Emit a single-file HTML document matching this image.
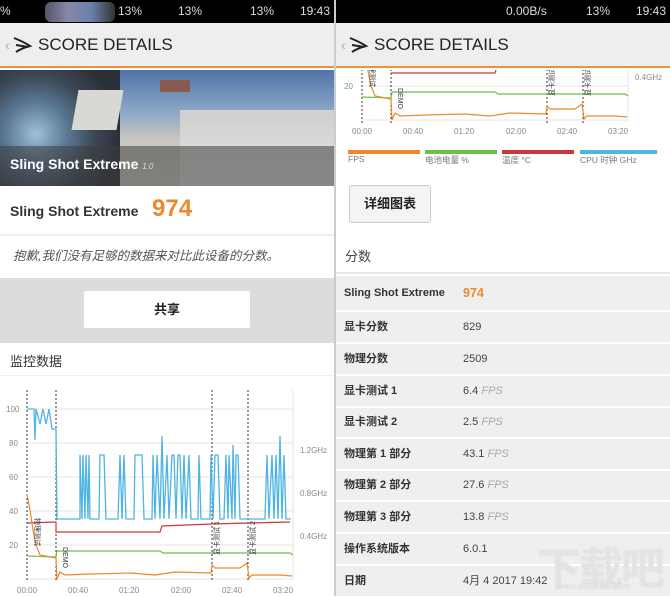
<!DOCTYPE html>
<html><head><meta charset="utf-8"><style>
*{margin:0;padding:0;box-sizing:border-box}
body{width:670px;height:596px;overflow:hidden;background:#fff;font-family:"Liberation Sans","Noto Sans CJK SC",sans-serif;position:relative}
.abs{position:absolute}
.sb{background:#000;height:23px;color:#ddd;font-size:12px;line-height:23px}
.hd{top:23px;height:45px;background:#eeeeee;border-bottom:2px solid #f0913a;font-size:17px;color:#222;line-height:44px}
.row{left:336px;width:334px;background:#efefef;border-top:2px solid #fff;font-size:11px;font-weight:bold;color:#333}
.row span{position:absolute;left:127px;font-weight:normal;color:#444}
.row i{color:#aaa}
</style></head><body>
<div class="abs sb" style="left:0;top:0;width:334px"><span style="position:absolute;left:0">%</span><span style="position:absolute;left:118px">13%</span><span style="position:absolute;left:178px">13%</span><span style="position:absolute;left:250px">13%</span><span style="position:absolute;left:300px">19:43</span>
<div class="abs" style="left:45px;top:2px;width:70px;height:20px;background:linear-gradient(90deg,#556,#88a,#6a7fa8,#333);border-radius:6px"></div></div>
<div class="abs sb" style="left:336px;top:0;width:334px"><span style="position:absolute;left:170px">0.00B/s</span><span style="position:absolute;left:250px">13%</span><span style="position:absolute;left:300px">19:43</span></div>
<div class="abs" style="left:334px;top:0;width:2px;height:596px;background:#ccc"></div>
<div class="abs hd" style="left:0;width:334px"><span style="position:absolute;left:5px;color:#aaa;font-size:14px">‹</span><svg class="abs" style="left:12px;top:13px" width="22" height="18"><path d="M2 2 Q12 6 18 10 Q10 12 4 16 M4 9 L16 11" stroke="#222" stroke-width="2" fill="none"/></svg><span style="position:absolute;left:38px">SCORE DETAILS</span></div>
<div class="abs hd" style="left:336px;width:334px"><span style="position:absolute;left:5px;color:#aaa;font-size:14px">‹</span><svg class="abs" style="left:12px;top:13px" width="22" height="18"><path d="M2 2 Q12 6 18 10 Q10 12 4 16 M4 9 L16 11" stroke="#222" stroke-width="2" fill="none"/></svg><span style="position:absolute;left:38px">SCORE DETAILS</span></div>
<div class="abs" style="left:0;top:70px;width:334px;height:116px;background:linear-gradient(180deg,#4f74a8 0%,#8aa6c6 35%,#c9c7bf 60%,#d8d4cc 100%);overflow:hidden">
<div class="abs" style="left:-20px;top:0;width:140px;height:116px;background:radial-gradient(circle at 40% 55%,#9ec0d8 0,#5a7894 30%,#3c4856 55%,#2b2f36 80%)"></div>
<div class="abs" style="left:75px;top:20px;width:45px;height:40px;background:#d8d8d4;transform:skew(-10deg)"></div>
<div class="abs" style="left:180px;top:40px;width:154px;height:76px;background:linear-gradient(180deg,#cfcfcf,#e6e4e0)"></div>
<div class="abs" style="left:160px;top:10px;width:30px;height:12px;background:#8a5a50"></div>
<div class="abs" style="left:0;top:76px;width:334px;height:40px;background:rgba(60,60,60,.55)"></div>
<div class="abs" style="left:10px;top:86px;color:#fff;font-weight:bold;font-size:14px">Sling Shot Extreme <span style="font-size:8px;font-style:italic;color:#ddd;font-weight:normal">1.0</span></div>
</div>
<div class="abs" style="left:0;top:186px;width:334px;height:50px;border-bottom:2px solid #eee"><span class="abs" style="left:10px;top:17px;font-size:14px;font-weight:bold;color:#333">Sling Shot Extreme</span><span class="abs" style="left:152px;top:9px;font-size:24px;font-weight:bold;color:#f0872a">974</span></div>
<div class="abs" style="left:13px;top:245px;font-size:12.5px;font-style:italic;color:#555">抱歉,我们没有足够的数据来对比此设备的分数。</div>
<div class="abs" style="left:0;top:278px;width:334px;height:65px;background:#dcdcdc"></div>
<div class="abs" style="left:84px;top:291px;width:166px;height:37px;background:#fff;border-radius:2px;text-align:center;line-height:37px;font-size:13px;font-weight:bold;color:#222">共享</div>
<div class="abs" style="left:10px;top:351px;font-size:13px;color:#333">监控数据</div>
<div class="abs" style="left:0;top:375px;width:334px;height:1px;background:#eee"></div>
<svg class="abs" style="left:0;top:0" width="334" height="596">
<g font-family="Liberation Sans" font-size="8" fill="#888">
<g stroke="#e4e4e4"><line x1="27" x2="293" y1="409" y2="409"/><line x1="27" x2="293" y1="443" y2="443"/><line x1="27" x2="293" y1="477" y2="477"/><line x1="27" x2="293" y1="511" y2="511"/><line x1="27" x2="293" y1="545" y2="545"/><line x1="27" x2="293" y1="579" y2="579"/><line x1="293" x2="293" y1="390" y2="579"/></g>
<text x="6" y="412">100</text><text x="9" y="446">80</text><text x="9" y="480">60</text><text x="9" y="514">40</text><text x="9" y="548">20</text>
<text x="300" y="453">1.2GHz</text><text x="300" y="496">0.8GHz</text><text x="300" y="539">0.4GHz</text>
<text x="17" y="593">00:00</text><text x="68" y="593">00:40</text><text x="119" y="593">01:20</text><text x="171" y="593">02:00</text><text x="222" y="593">02:40</text><text x="273" y="593">03:20</text>
</g>
<g stroke="#333" stroke-dasharray="2,2"><line x1="27" x2="27" y1="390" y2="582"/><line x1="56" x2="56" y1="390" y2="582"/><line x1="212" x2="212" y1="390" y2="582"/><line x1="248" x2="248" y1="390" y2="582"/></g>
<polyline fill="none" stroke="#4fb3e3" stroke-width="1.3" points="27,409 34,409 35,440 36,409 40,424 43,409 46,424 49,409 52,429 56,429 57,519 80,519 80,455 82,519 83,455 85,519 86,455 88,519 89,455 90,519 99,519 100,455 104,455 106,519 118,519 120,455 122,519 124,455 126,519 134,519 135,455 142,455 144,519 152,519 153,455 155,519 157,455 160,519 162,436 164,519 167,455 169,519 172,455 174,455 176,519 178,455 180,455 182,519 184,455 186,519 189,455 191,519 198,519 199,455 201,519 210,519 211,455 213,519 215,455 218,455 220,519 224,519 226,455 228,519 229,455 232,519 233,445 235,519 236,455 238,455 240,519 265,519 267,455 269,519 272,455 274,519 276,455 278,519 280,436 282,519 284,455 286,519 291,519"/>
<polyline fill="none" stroke="#c8373b" stroke-width="1.2" points="27,523 56,522 56,532 160,532 162,526 212,524 248,523 290,522"/>
<polyline fill="none" stroke="#6dbf4b" stroke-width="1.2" points="27,556 56,557 57,551 160,551 163,553 290,553 293,555"/>
<polyline fill="none" stroke="#f0872a" stroke-width="1.2" points="27,494 30,510 33,530 36,545 40,555 56,558 57,579 60,572 65,575 90,574 130,573 155,575 175,572 211,573 212,565 215,568 240,568 247,563 249,578 252,575 280,575 292,576"/>
<g font-size="7" fill="#333" font-family="Liberation Sans,Noto Sans CJK SC,sans-serif"><text transform="translate(35,548) rotate(90)" x="-30">物理测试</text><text transform="translate(63,552) rotate(90)" x="-5">DEMO</text><text transform="translate(219,555) rotate(-90)">显卡测试 1</text><text transform="translate(255,555) rotate(-90)">显卡测试 2</text></g>
</svg>
<svg class="abs" style="left:336px;top:70px" width="334" height="72">
<g transform="translate(-1,-529)">
<g stroke="#e4e4e4"><line x1="27" x2="293" y1="511" y2="511"/><line x1="27" x2="293" y1="545" y2="545"/><line x1="27" x2="293" y1="579" y2="579"/><line x1="293" x2="293" y1="500" y2="579"/></g>
<g font-family="Liberation Sans" font-size="8" fill="#888"><text x="9" y="548">20</text><text x="300" y="539">0.4GHz</text>
<text x="17" y="593">00:00</text><text x="68" y="593">00:40</text><text x="119" y="593">01:20</text><text x="171" y="593">02:00</text><text x="222" y="593">02:40</text><text x="273" y="593">03:20</text></g>
<g stroke="#333" stroke-dasharray="2,2"><line x1="27" x2="27" y1="500" y2="582"/><line x1="56" x2="56" y1="500" y2="582"/><line x1="212" x2="212" y1="500" y2="582"/><line x1="248" x2="248" y1="500" y2="582"/></g>
<polyline fill="none" stroke="#c8373b" stroke-width="1.2" points="56,532 160,532 162,526"/>
<polyline fill="none" stroke="#6dbf4b" stroke-width="1.2" points="27,556 56,557 57,551 160,551 163,553 290,553 293,555"/>
<polyline fill="none" stroke="#f0872a" stroke-width="1.2" points="27,494 30,510 33,530 36,545 40,555 56,558 57,579 60,572 65,575 90,574 130,573 155,575 175,572 211,573 212,565 215,568 240,568 247,563 249,578 252,575 280,575 292,576"/>
<g font-size="7" fill="#333" font-family="Liberation Sans,Noto Sans CJK SC,sans-serif"><text transform="translate(35,548) rotate(90)" x="-30">物理测试</text><text transform="translate(63,552) rotate(90)" x="-5">DEMO</text><text transform="translate(219,555) rotate(-90)">显卡测试 1</text><text transform="translate(255,555) rotate(-90)">显卡测试 2</text></g>
</g></svg>
<div class="abs" style="left:348px;top:150px;width:72px;height:4px;background:#f0872a"></div>
<div class="abs" style="left:425px;top:150px;width:72px;height:4px;background:#6dbf4b"></div>
<div class="abs" style="left:502px;top:150px;width:72px;height:4px;background:#c8373b"></div>
<div class="abs" style="left:580px;top:150px;width:77px;height:4px;background:#4fb3e3"></div>
<div class="abs" style="left:348px;top:154px;font-size:8.5px;color:#777">FPS</div>
<div class="abs" style="left:425px;top:154px;font-size:8.5px;color:#777">电池电量 %</div>
<div class="abs" style="left:502px;top:154px;font-size:8.5px;color:#777">温度 °C</div>
<div class="abs" style="left:580px;top:154px;font-size:8.5px;color:#777">CPU 时钟 GHz</div>
<div class="abs" style="left:349px;top:185px;width:82px;height:38px;background:#f4f4f4;border:1px solid #ccc;border-radius:3px;text-align:center;line-height:36px;font-size:13px;font-weight:bold;color:#222">详细图表</div>
<div class="abs" style="left:345px;top:246px;font-size:13px;color:#444">分数</div>
<div class="abs" style="left:336px;top:272px;width:334px;height:2px;background:#e8e8e8"></div>
<div class="abs row" style="top:274px;height:36px;line-height:34px;padding-left:8px">Sling Shot Extreme<span style="color:#f0872a;font-weight:bold;font-size:12.5px">974</span></div>
<div class="abs row" style="top:310px;height:32px;line-height:30px;padding-left:8px">显卡分数<span>829</span></div>
<div class="abs row" style="top:342px;height:32px;line-height:30px;padding-left:8px">物理分数<span>2509</span></div>
<div class="abs row" style="top:374px;height:32px;line-height:30px;padding-left:8px">显卡测试 1<span>6.4 <i>FPS</i></span></div>
<div class="abs row" style="top:406px;height:31px;line-height:29px;padding-left:8px">显卡测试 2<span>2.5 <i>FPS</i></span></div>
<div class="abs row" style="top:437px;height:32px;line-height:30px;padding-left:8px">物理第 1 部分<span>43.1 <i>FPS</i></span></div>
<div class="abs row" style="top:469px;height:31px;line-height:29px;padding-left:8px">物理第 2 部分<span>27.6 <i>FPS</i></span></div>
<div class="abs row" style="top:500px;height:32px;line-height:30px;padding-left:8px">物理第 3 部分<span>13.8 <i>FPS</i></span></div>
<div class="abs row" style="top:532px;height:32px;line-height:30px;padding-left:8px">操作系统版本<span>6.0.1</span></div>
<div class="abs row" style="top:564px;height:32px;line-height:30px;padding-left:8px">日期<span>4月 4 2017 19:42</span></div>
<div class="abs" style="left:537px;top:533px;font-size:44px;color:rgba(255,255,255,.45);font-weight:bold;letter-spacing:-2px;text-shadow:0 0 1px #ccc">下载吧</div>
<div class="abs" style="left:556px;top:581px;font-size:9px;color:rgba(255,255,255,.6);text-shadow:0 0 1px #bbb">www.xiazaiba.com</div>
</body></html>
